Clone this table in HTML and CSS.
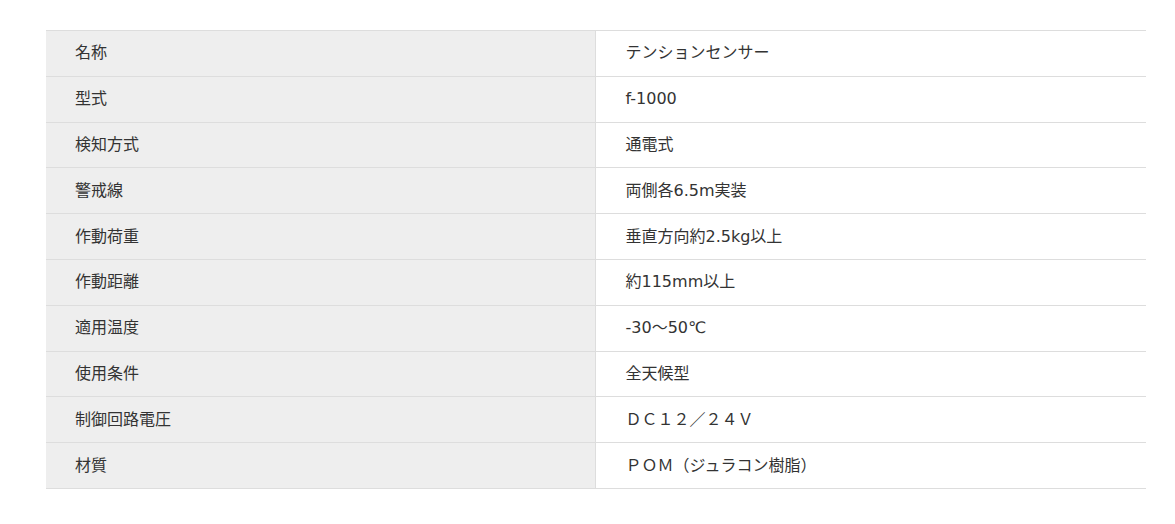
FILE: index.html
```html
<!DOCTYPE html>
<html lang="ja">
<head>
<meta charset="utf-8">
<title>仕様</title>
<link rel="stylesheet" href="styles.css">
</head>
<body>
<div class="page">
<table class="spec">
<tbody>
<tr><th>名称</th><td>テンションセンサー</td></tr>
<tr><th>型式</th><td>f-1000</td></tr>
<tr><th>検知方式</th><td>通電式</td></tr>
<tr><th>警戒線</th><td>両側各6.5m実装</td></tr>
<tr><th>作動荷重</th><td>垂直方向約2.5kg以上</td></tr>
<tr><th>作動距離</th><td>約115mm以上</td></tr>
<tr><th>適用温度</th><td>-30～50℃</td></tr>
<tr><th>使用条件</th><td>全天候型</td></tr>
<tr><th>制御回路電圧</th><td>ＤＣ１２／２４Ｖ</td></tr>
<tr><th>材質</th><td>ＰＯＭ（ジュラコン樹脂）</td></tr>
</tbody>
</table>
</div>
</body>
</html>
```
FILE: styles.css
```css
html, body {
  margin: 0;
  padding: 0;
  background: #fff;
}
.page {
  padding: 30px 29px 0 46px;
}
.spec {
  width: 1100px;
  border-collapse: collapse;
  font-family: "DejaVu Sans", "Noto Sans CJK JP", sans-serif;
  font-size: 15px;
  color: #333;
}
.spec th,
.spec td {
  border-top: 1px solid #ddd;
  border-bottom: 1px solid #ddd;
  height: 45.8px;
  padding: 0 29px;
  box-sizing: border-box;
  text-align: left;
  font-weight: normal;
  vertical-align: middle;
  line-height: 24px;
  font-size: 16px;
}
.spec th {
  width: 549px;
  background: #eee;
  border-right: 1px solid #ddd;
}
.spec td {
  padding-left: 30px;
  background: #fff;
}
```
